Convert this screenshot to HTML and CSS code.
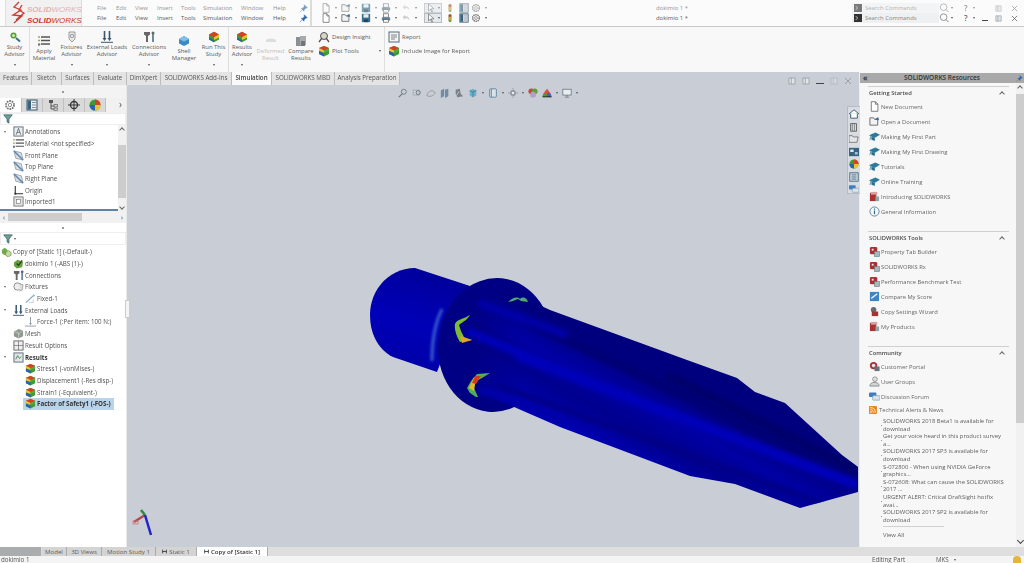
FILE: index.html
```html
<!DOCTYPE html>
<html lang="en">
<head>
<meta charset="utf-8">
<title>SOLIDWORKS</title>
<link rel="stylesheet" href="styles.css">
</head>
<body>
<svg class="defs" aria-hidden="true">
  <symbol id="doc" viewBox="0 0 12 12"><path d="M2.5 .8h4.6l2.6 2.6v7.8h-7.2z M7 .8v2.7h2.7" fill="#fff" stroke="#666" stroke-width=".9"/></symbol>
  <symbol id="open" viewBox="0 0 12 12"><path d="M1 2h4l1 1.500h3.500V10H1z" fill="#f3f3f3" stroke="#666"/><path d="M6 4l4-3 1 3.500z" fill="#3a6e96"/></symbol>
  <symbol id="save" viewBox="0 0 12 12"><rect x="1" y="1" width="10" height="10" fill="#39708f"/><rect x="3" y="1.500" width="6" height="4" fill="#e6eef2"/><rect x="3.500" y="7.500" width="5" height="3.500" fill="#24465c"/></symbol>
  <symbol id="print" viewBox="0 0 12 12"><rect x="3" y="1" width="6" height="4" fill="#fff" stroke="#555" stroke-width=".8"/><rect x="1" y="5" width="10" height="4" rx="1" fill="#5d7f96"/><rect x="3" y="8" width="6" height="3" fill="#fff" stroke="#555" stroke-width=".8"/></symbol>
  <symbol id="undo" viewBox="0 0 12 12"><path d="M2 5l3-3v2c3 0 5 1 5 5-1-2-2-3-5-3v2z" fill="#ccc"/></symbol>
  <symbol id="cursor" viewBox="0 0 12 12"><path d="M3 1l6.500 6H6.300l1.600 3.600-1 .4-1.600-3.600L3 9.500z" fill="#fff" stroke="#666" stroke-width=".8"/></symbol>
  <symbol id="flag" viewBox="0 0 12 12"><rect x="4" y="1" width="4" height="10" rx="2" fill="#a8a872"/><circle cx="6" cy="3.300" r="1.600" fill="#c8402c"/><circle cx="6" cy="7" r="1.500" fill="#d9a52a"/><circle cx="6" cy="9.500" r="1" fill="#4d9a3a"/></symbol>
  <symbol id="list" viewBox="0 0 12 12"><rect x="1" y="1" width="10" height="10" fill="#e8eef1" stroke="#35596f"/><rect x="1.500" y="1.500" width="3.500" height="9" fill="#38637e"/><path d="M6 3.500h4M6 6h4M6 8.500h4" stroke="#777" stroke-width=".8"/></symbol>
  <symbol id="gear" viewBox="0 0 12 12"><circle cx="6" cy="6" r="4" fill="none" stroke="#777" stroke-width="1.800" stroke-dasharray="1.700 .8"/><circle cx="6" cy="6" r="1.700" fill="none" stroke="#777" stroke-width=".8"/></symbol>
  <symbol id="pin" viewBox="0 0 12 12"><path d="M7 1l4 4-2 .5-2 2-.5 2L3 6l2-.5 2-2zM4 8l-3 3" fill="#2f67a8" stroke="#2f67a8" stroke-width=".7"/></symbol>
  <symbol id="prompt" viewBox="0 0 12 12"><rect width="12" height="12" fill="#333"/><path d="M2.500 3l3 3-3 3" fill="none" stroke="#ddd" stroke-width="1.200"/></symbol>
  <symbol id="search" viewBox="0 0 12 12"><circle cx="5.500" cy="5" r="4" fill="none" stroke="#777" stroke-width=".9"/><path d="M8.500 8l3 3" stroke="#777" stroke-width="1.100"/></symbol>
  <symbol id="x" viewBox="0 0 8 8"><path d="M1 1l6 6M7 1L1 7" stroke="#666" stroke-width=".9"/></symbol>
  <symbol id="beam" viewBox="0 0 8 8"><path d="M1 1v6M7 1v6M1 4h6" stroke="#26323c" stroke-width="1.300"/></symbol>
  <symbol id="study" viewBox="0 0 12 12"><circle cx="4.500" cy="4.500" r="3" fill="#4f9d3f"/><circle cx="4.500" cy="4.500" r="1.500" fill="#d8e8a0"/><path d="M7 7l4 3.500" stroke="#33718f" stroke-width="2"/></symbol>
  <symbol id="material" viewBox="0 0 12 12"><path d="M3 2h9M3 5.500h9M3 9h9" stroke="#555" stroke-width="1.300"/><path d="M0 2h2M0 5.500h2" stroke="#9aa36a" stroke-width="1.300"/><circle cx="1" cy="9.500" r="1.300" fill="#777"/></symbol>
  <symbol id="fixtures" viewBox="0 0 12 12"><path d="M3 1h6v7l-3 3-3-3z" fill="#e8e8e8" stroke="#888" stroke-width=".8"/><circle cx="6" cy="5" r="1.700" fill="none" stroke="#888" stroke-width=".8"/></symbol>
  <symbol id="loads" viewBox="0 0 12 12"><path d="M3.500 0v8M8.500 0v8" stroke="#39586f" stroke-width="1.600"/><path d="M1.500 7h4l-2 3zM6.500 7h4l-2 3z" fill="#39586f"/><path d="M0 11.300h12" stroke="#39586f"/></symbol>
  <symbol id="conn" viewBox="0 0 12 12"><path d="M1 1h6v2.500L5 5v6H3V5L1 3.500z" fill="#666"/><rect x="9" y="1" width="2" height="10" fill="#6b8a9d"/><circle cx="10" cy="2" r="1.500" fill="#666"/></symbol>
  <symbol id="shell" viewBox="0 0 12 12"><path d="M1 4l5-3 5 3v4.500L6 11 1 8.500z" fill="#3d8bc4"/><path d="M1 4l5 2.500L11 4 6 1z" fill="#7fc0e8"/></symbol>
  <symbol id="run" viewBox="0 0 12 12"><path d="M1 3.500L6 .8l5 2.700v5L6 11.200 1 8.500z" fill="#3f9a35"/><path d="M1 3.500L6 .8l5 2.700-5 2.700z" fill="#d93f24"/><path d="M6 6.200l5-2.700v3L6 9z" fill="#eac52d"/><path d="M1 8.500V6.500l5 2.500v2.200z" fill="#2d62ae"/></symbol>
  <symbol id="deform" viewBox="0 0 12 12"><path d="M1 5c3-2 7-2 10 0v2H1z" fill="#ddd"/></symbol>
  <symbol id="compare" viewBox="0 0 12 12"><rect x="1" y="2" width="6" height="9" fill="#8b8f92"/><rect x="5" y="1" width="6" height="9" fill="#a7abae"/><rect x="6" y="6" width="4" height="5" fill="#6f7578"/></symbol>
  <symbol id="insight" viewBox="0 0 12 12"><circle cx="6" cy="5" r="3.500" fill="#d6d6c8" stroke="#555"/><path d="M1 11l3-4M11 11L8 7" stroke="#555" stroke-width="1.300"/></symbol>
  <symbol id="report" viewBox="0 0 12 12"><rect x="1" y="1" width="10" height="10" fill="#f4f4f4" stroke="#4f6d80"/><path d="M3 4h6M3 6h6M3 8h4" stroke="#666" stroke-width=".8"/></symbol>
  <symbol id="assembly" viewBox="0 0 12 12"><path d="M1 1l8 2 2 8-8-2z" fill="#d9dfe4" stroke="#77838c" stroke-width=".7"/><path d="M1 1l10 10" stroke="#5f86ac" stroke-width="1.600"/></symbol>
  <symbol id="annot" viewBox="0 0 12 12"><rect x="1" y="1" width="10" height="10" fill="#e9eef2" stroke="#5d6b75"/><path d="M3.500 9.500L6 2.500l2.500 7M4.500 7h3" fill="none" stroke="#555" stroke-width=".8"/></symbol>
  <symbol id="origin" viewBox="0 0 12 12"><path d="M2.500 1v8.500H11" fill="none" stroke="#333" stroke-width="1.200"/><rect x="1.500" y="8.500" width="2" height="2" fill="#333"/></symbol>
  <symbol id="imported" viewBox="0 0 12 12"><rect x="1" y="1" width="10" height="10" fill="#e5e5e5" stroke="#777"/><rect x="4" y="4" width="4" height="4" fill="#fff" stroke="#777" stroke-width=".7"/></symbol>
  <symbol id="filter" viewBox="0 0 12 12"><path d="M.8 1h10.400L7.200 6v5L4.800 9.500V6z" fill="#6f9f8c" stroke="#33586f" stroke-width=".8"/></symbol>
  <symbol id="cubes" viewBox="0 0 12 12"><path d="M1 4l3-2 3 2v4L4 10 1 8z" fill="#75a84e"/><path d="M5 7l3-2 3 2v3l-3 2-3-2z" fill="#c5d9a0" stroke="#48752e" stroke-width=".6"/></symbol>
  <symbol id="part" viewBox="0 0 12 12"><path d="M1 5l4-3 6 2-1 6-6 1.500-3-3z" fill="#66a13d"/><path d="M4 6l2 2 4-5.500" fill="none" stroke="#1f3f1a" stroke-width="1.300"/></symbol>
  <symbol id="clock" viewBox="0 0 12 12"><circle cx="5" cy="6" r="4" fill="#eee" stroke="#888"/><path d="M7 3l4 1-1 6-3 1" fill="#ddd" stroke="#888" stroke-width=".7"/></symbol>
  <symbol id="fixed" viewBox="0 0 12 12"><path d="M1 10.500L9 3" stroke="#7fa8c8" stroke-width="1.200"/><path d="M4 10.500h5V7" fill="none" stroke="#bbb" stroke-width=".8"/><path d="M9 1l2 2-2 1z" fill="#7fa8c8"/></symbol>
  <symbol id="force" viewBox="0 0 12 12"><path d="M6 1v8" stroke="#8e9aa5"/><path d="M4.500 7.500h3L6 10z" fill="#8e9aa5"/><path d="M0 11h12" stroke="#8e9aa5"/></symbol>
  <symbol id="mesh" viewBox="0 0 12 12"><path d="M1 4l5-3 5 2v6l-5 2.500L1 9z" fill="#8e988b"/><path d="M1 4l5 2 5-3M6 6v5.500M3.500 2.500L8 8" stroke="#e9e9e9" stroke-width=".5" fill="none"/></symbol>
  <symbol id="options" viewBox="0 0 12 12"><rect x="1" y="1" width="10" height="10" fill="#eee" stroke="#666"/><path d="M6 1v10M1 6h10" stroke="#666" stroke-width=".7"/></symbol>
  <symbol id="results" viewBox="0 0 12 12"><rect x="1" y="1" width="10" height="10" fill="#dfe5e8" stroke="#5d6b75"/><path d="M3 8l2-4 2 3 2-2" fill="none" stroke="#4c8158" stroke-width="1"/></symbol>
  <symbol id="plot" viewBox="0 0 12 12"><path d="M1 3l5-2 5 2v6l-5 2.500L1 9z" fill="#3f9a35"/><path d="M1 3l5-2 5 2-5 2.500z" fill="#d93f24"/><path d="M1 3l5 2.500V8L1 6z" fill="#eac52d"/><path d="M6 5.500L11 3v3L6 8z" fill="#55a83c"/><path d="M1 6l5 2v3.500L1 9z" fill="#2d62ae"/></symbol>
  <symbol id="config" viewBox="0 0 12 12"><rect x="2" y="1" width="4" height="3" fill="#555"/><path d="M4 4v6h3M4 7h3" fill="none" stroke="#555"/><rect x="7" y="5.500" width="3.500" height="2.500" fill="#c7ccd0" stroke="#555" stroke-width=".6"/><rect x="7" y="9" width="3.500" height="2.500" fill="#c7ccd0" stroke="#555" stroke-width=".6"/></symbol>
  <symbol id="cross" viewBox="0 0 12 12"><circle cx="6" cy="6" r="3.500" fill="none" stroke="#333" stroke-width="1.300"/><path d="M6 0v12M0 6h12" stroke="#333"/></symbol>
  <symbol id="cap" viewBox="0 0 12 12"><path d="M0 4.500L7 1.500l5 2.500-6 3.500z" fill="#2c7a9b"/><path d="M3 6.500v2.800l3 1v-2.500zM2 5.500L1 10" fill="#236a88" stroke="#236a88" stroke-width=".7"/></symbol>
  <symbol id="book" viewBox="0 0 12 12"><rect x="1" y="2" width="7" height="9" fill="#a93232"/><rect x="2" y="1" width="7" height="3" fill="#d8a0a0"/><rect x="7" y="6" width="4" height="5" fill="#90a5ad"/></symbol>
  <symbol id="info" viewBox="0 0 12 12"><circle cx="6" cy="6" r="5" fill="#f4f8fb" stroke="#5b7f9c"/><path d="M6 5v4M6 2.800v1.200" stroke="#3b6686" stroke-width="1.300"/></symbol>
  <symbol id="tool" viewBox="0 0 12 12"><rect x="1" y="1" width="8" height="8" rx="1.500" fill="#a83131"/><rect x="3" y="3" width="2" height="2" fill="#eee"/><rect x="6" y="6" width="5.500" height="5.500" fill="#a8b7bd" stroke="#607078" stroke-width=".6"/></symbol>
  <symbol id="score" viewBox="0 0 12 12"><rect x="1" y="1" width="10" height="10" fill="#3c84c4"/><path d="M2.500 8L9 3" stroke="#e8f2fa" stroke-width="1.500"/></symbol>
  <symbol id="wizard" viewBox="0 0 12 12"><circle cx="5" cy="4" r="3" fill="#5f6d73"/><rect x="3" y="6" width="7" height="5" fill="#a83131"/></symbol>
  <symbol id="portal" viewBox="0 0 12 12"><circle cx="5" cy="5" r="4" fill="#a83131"/><circle cx="5" cy="5" r="2" fill="#dfe5ea"/><rect x="6" y="6" width="5.500" height="5" fill="#63737b"/></symbol>
  <symbol id="users" viewBox="0 0 12 12"><circle cx="6.500" cy="3.500" r="2.500" fill="#e5e5e5" stroke="#777" stroke-width=".8"/><path d="M1 11c0-3 2-4 5-4s5 1 5 4z" fill="#cfd6da" stroke="#777" stroke-width=".8"/></symbol>
  <symbol id="forum" viewBox="0 0 12 12"><rect x="0" y="1.500" width="8" height="5" rx="1" fill="#3f7cc0"/><rect x="4" y="5" width="8" height="5" rx="1" fill="#d8e3ec" stroke="#6d8aa3" stroke-width=".6"/></symbol>
  <symbol id="rss" viewBox="0 0 12 12"><rect width="12" height="12" rx="1" fill="#e58a2c"/><circle cx="3" cy="9" r="1.200" fill="#fff"/><path d="M2 5.500c3 0 4.500 1.500 4.500 4.500M2 2.500c5 0 7.500 2.500 7.500 7.500" fill="none" stroke="#fff" stroke-width="1.100"/></symbol>
  <symbol id="home" viewBox="0 0 12 12"><path d="M0 6l6-5 6 5M2 5.500V11h8V5.500" fill="#fff" stroke="#33566e" stroke-width="1.100"/></symbol>
  <symbol id="parts" viewBox="0 0 12 12"><rect x="2" y="2" width="7" height="9" fill="#d7dbdd" stroke="#555"/><path d="M4 2v9M6.500 2v9" stroke="#555" stroke-width=".7"/></symbol>
  <symbol id="folder" viewBox="0 0 12 12"><path d="M0 2h4l1 1.500h6L9.500 10H0z" fill="#e3e5e6" stroke="#555" stroke-width=".8"/></symbol>
  <symbol id="palette" viewBox="0 0 12 12"><rect x="0" y="1" width="12" height="10" fill="#38637e"/><rect x="1.500" y="3" width="4" height="3" fill="#dfe9ef"/><rect x="7" y="6" width="3.500" height="3" fill="#a7c0cf"/></symbol>
  <symbol id="ball" viewBox="0 0 12 12"><circle cx="6" cy="6" r="5.500" fill="#3f9a35"/><path d="M6 6V.5A5.500 5.500 0 0 1 11.500 6z" fill="#d93f24"/><path d="M6 6h5.500A5.500 5.500 0 0 1 6 11.500z" fill="#eac52d"/><path d="M6 6v5.500A5.500 5.500 0 0 1 .5 6z" fill="#2d62ae"/></symbol>
  <symbol id="tree" viewBox="0 0 12 12"><rect x="1" y="1" width="10" height="10" fill="#d9e4ea" stroke="#33566e"/><path d="M3 3.500h6M3 6h6M3 8.500h6" stroke="#33566e"/></symbol>
  <symbol id="panel" viewBox="0 0 12 12"><rect x="1.500" y="1.500" width="9" height="9" fill="#dfe4e7" stroke="#8c9398"/><path d="M5 1.500v9" stroke="#8c9398"/></symbol>
  <symbol id="hud1" viewBox="0 0 12 12"><circle cx="7" cy="4.500" r="3" fill="none" stroke="#687480"/><path d="M5 7l-4 4" stroke="#687480" stroke-width="1.300"/></symbol>
  <symbol id="hud2" viewBox="0 0 12 12"><rect x="1.500" y="2.500" width="7" height="6" fill="none" stroke="#8b949c" stroke-dasharray="1.500 1"/><circle cx="7.500" cy="5.500" r="2.500" fill="none" stroke="#687480"/></symbol>
  <symbol id="hud3" viewBox="0 0 12 12"><path d="M1 9c2-7 8-7 10-3-2 4-7 5-10 3z" fill="none" stroke="#8b949c"/></symbol>
  <symbol id="hud4" viewBox="0 0 12 12"><path d="M1 3l4-2v9l-4 2zM6 2l4-1v9l-4 2z" fill="#6f8da3"/></symbol>
  <symbol id="hud5" viewBox="0 0 12 12"><path d="M2 2l5-1 1 6 3 3-7 1-2-4z" fill="#7a8188"/><path d="M3 9l3-5" stroke="#dde" stroke-width=".8"/></symbol>
  <symbol id="hud6" viewBox="0 0 12 12"><path d="M2 3l4-2 4 2v6l-4 2-4-2z" fill="#6bb0c8"/><path d="M6 5v6M2 3l4 2 4-2" stroke="#356f88" fill="none" stroke-width=".8"/></symbol>
  <symbol id="hud7" viewBox="0 0 12 12"><rect x="2" y="1" width="8" height="10" rx="1" fill="#dbe3e8" stroke="#4f7e9e"/><path d="M4 1v10" stroke="#4f7e9e"/></symbol>
  <symbol id="hud8" viewBox="0 0 12 12"><circle cx="6" cy="6" r="3.500" fill="#8f969c"/><circle cx="6" cy="6" r="1.500" fill="#eee"/><path d="M6 0v2M6 10v2M0 6h2M10 6h2" stroke="#8f969c"/></symbol>
  <symbol id="hud9" viewBox="0 0 12 12"><circle cx="4" cy="4" r="3.500" fill="#c9463b"/><circle cx="8" cy="4" r="3.500" fill="#5f9d3f"/><circle cx="6" cy="8" r="3.500" fill="#b4a0c0"/></symbol>
  <symbol id="hud10" viewBox="0 0 12 12"><path d="M6 1l4 5H2z" fill="#d9503e"/><path d="M2 6h4v5H0z" fill="#55963a"/><path d="M6 6h4l2 5H6z" fill="#3d67b0"/><path d="M1 10.500h10" stroke="#222"/></symbol>
  <symbol id="hud11" viewBox="0 0 12 12"><rect x="1" y="1.500" width="10" height="7" fill="#e9eef1" stroke="#6d7880"/><path d="M6 8.500v2M3.500 11h5" stroke="#6d7880"/></symbol>
</svg>

<div class="app">
  <header class="title">
    <div class="logo">
      <div class="logo-ghost"><span class="sw-a">SOLID</span><span class="sw-b">WORKS</span></div>
      <div class="logo-main"><span class="sw-a">SOLID</span><span class="sw-b">WORKS</span></div>
      <svg class="logo-mark" viewBox="0 0 16 24"><path d="M9 1L4 6l7 3-8 5 9 1-8 7M12 4l-3 5 5 3-8 7" fill="none" stroke="#cc3a34" stroke-width="1.300"/></svg>
    </div>
    <nav class="menus">
      <div class="menu-row ghost"><span>File</span><span>Edit</span><span>View</span><span>Insert</span><span>Tools</span><span>Simulation</span><span>Window</span><span>Help</span><svg class="i9"><use href="#pin"/></svg></div>
      <div class="menu-row"><span>File</span><span>Edit</span><span>View</span><span>Insert</span><span>Tools</span><span>Simulation</span><span>Window</span><span>Help</span><svg class="i9"><use href="#pin"/></svg></div>
    </nav>
    <div class="quick">
      <div class="quick-row ghost">
        <span class="q"><svg class="i10"><use href="#doc"/></svg><i class="caret"></i></span>
        <span class="q"><svg class="i10"><use href="#open"/></svg><i class="caret"></i></span>
        <span class="q"><svg class="i10"><use href="#save"/></svg><i class="caret"></i></span>
        <span class="q"><svg class="i10"><use href="#print"/></svg><i class="caret"></i></span>
        <span class="q"><svg class="i10"><use href="#undo"/></svg><i class="caret"></i></span>
        <span class="q sel"><svg class="i10"><use href="#cursor"/></svg><i class="caret"></i></span>
        <span class="q narrow"><svg class="i10"><use href="#flag"/></svg></span>
        <span class="q narrow"><svg class="i10"><use href="#list"/></svg></span>
        <span class="q"><svg class="i10"><use href="#gear"/></svg><i class="caret"></i></span>
      </div>
      <div class="quick-row">
        <span class="q"><svg class="i10"><use href="#doc"/></svg><i class="caret"></i></span>
        <span class="q"><svg class="i10"><use href="#open"/></svg><i class="caret"></i></span>
        <span class="q"><svg class="i10"><use href="#save"/></svg><i class="caret"></i></span>
        <span class="q"><svg class="i10"><use href="#print"/></svg><i class="caret"></i></span>
        <span class="q"><svg class="i10"><use href="#undo"/></svg><i class="caret"></i></span>
        <span class="q sel"><svg class="i10"><use href="#cursor"/></svg><i class="caret"></i></span>
        <span class="q narrow"><svg class="i10"><use href="#flag"/></svg></span>
        <span class="q narrow"><svg class="i10"><use href="#list"/></svg></span>
        <span class="q"><svg class="i10"><use href="#gear"/></svg><i class="caret"></i></span>
      </div>
    </div>
    <div class="docname"><div class="ghost">dokimio 1 *</div><div>dokimio 1 *</div></div>
    <div class="cmd">
      <div class="cmd-row ghost">
        <span class="search-box"><svg class="i8"><use href="#prompt"/></svg><span>Search Commands</span></span>
        <svg class="i10"><use href="#search"/></svg><i class="caret gap-s"></i><span class="help">?</span><i class="caret"></i><i class="win-min"></i><svg class="i7 rest"><use href="#panel"/></svg><svg class="i7 close"><use href="#x"/></svg>
      </div>
      <div class="cmd-row">
        <span class="search-box"><svg class="i8"><use href="#prompt"/></svg><span>Search Commands</span></span>
        <svg class="i10"><use href="#search"/></svg><i class="caret gap-s"></i><span class="help">?</span><i class="caret"></i><i class="win-min on"></i><svg class="i7 rest"><use href="#panel"/></svg><svg class="i7 close"><use href="#x"/></svg>
      </div>
    </div>
  </header>

  <section class="ribbon">
    <div class="rb w29 sep"><svg class="i12"><use href="#study"/></svg><span>Study<br>Advisor</span><i class="caret"></i></div>
    <div class="rb w28 low"><svg class="i12"><use href="#material"/></svg><span>Apply<br>Material</span></div>
    <div class="rb w27"><svg class="i12"><use href="#fixtures"/></svg><span>Fixtures<br>Advisor</span><i class="caret"></i></div>
    <div class="rb w44"><svg class="i12"><use href="#loads"/></svg><span>External Loads<br>Advisor</span><i class="caret"></i></div>
    <div class="rb w40"><svg class="i12"><use href="#conn"/></svg><span>Connections<br>Advisor</span><i class="caret"></i></div>
    <div class="rb w30 low"><svg class="i12"><use href="#shell"/></svg><span>Shell<br>Manager</span></div>
    <div class="rb w30 sep"><svg class="i12"><use href="#run"/></svg><span>Run This<br>Study</span><i class="caret"></i></div>
    <div class="rb w26"><svg class="i12"><use href="#run"/></svg><span>Results<br>Advisor</span><i class="caret"></i></div>
    <div class="rb w31 low off"><svg class="i12"><use href="#deform"/></svg><span>Deformed<br>Result</span></div>
    <div class="rb w30 low"><svg class="i12"><use href="#compare"/></svg><span>Compare<br>Results</span></div>
    <div class="rb-list w69 sep">
      <div class="rb-line"><svg class="i12"><use href="#insight"/></svg><span>Design Insight</span></div>
      <div class="rb-line"><svg class="i12"><use href="#plot"/></svg><span>Plot Tools</span><i class="caret push"></i></div>
    </div>
    <div class="rb-list grow">
      <div class="rb-line"><svg class="i12"><use href="#report"/></svg><span>Report</span></div>
      <div class="rb-line"><svg class="i12"><use href="#plot"/></svg><span>Include Image for Report</span></div>
    </div>
  </section>

  <main class="workspace">
    <div class="center">
      <nav class="tabs">
        <span class="tab w32">Features</span><span class="tab w30t">Sketch</span><span class="tab w32">Surfaces</span><span class="tab w33">Evaluate</span><span class="tab w34">DimXpert</span><span class="tab w71">SOLIDWORKS Add-Ins</span><span class="tab w40t active">Simulation</span><span class="tab w63">SOLIDWORKS MBD</span><span class="tab w65">Analysis Preparation</span>
        <div class="view-win">
          <svg class="i8"><use href="#panel"/></svg><svg class="i8"><use href="#panel"/></svg><i class="win-min on"></i><svg class="i8 faded"><use href="#panel"/></svg><svg class="i8 faded"><use href="#x"/></svg>
        </div>
      </nav>
      <div class="body">
        <aside class="left">
          <div class="splitter"><i></i></div>
          <div class="mgr-tabs">
            <span class="mgr first"><svg class="i12"><use href="#gear"/></svg></span>
            <span class="mgr"><svg class="i12"><use href="#list"/></svg></span>
            <span class="mgr"><svg class="i12"><use href="#config"/></svg></span>
            <span class="mgr"><svg class="i12"><use href="#cross"/></svg></span>
            <span class="mgr"><svg class="i12"><use href="#ball"/></svg></span>
            <span class="mgr-next">›</span>
          </div>
          <div class="filter"><svg class="i10"><use href="#filter"/></svg></div>
          <div class="tree-top">
            <div class="tree">
              <div class="row l1 exp"><svg class="i11"><use href="#annot"/></svg><span>Annotations</span></div>
              <div class="row l1"><svg class="i11"><use href="#material"/></svg><span>Material &lt;not specified&gt;</span></div>
              <div class="row l1"><svg class="i11"><use href="#assembly"/></svg><span>Front Plane</span></div>
              <div class="row l1"><svg class="i11"><use href="#assembly"/></svg><span>Top Plane</span></div>
              <div class="row l1"><svg class="i11"><use href="#assembly"/></svg><span>Right Plane</span></div>
              <div class="row l1"><svg class="i11"><use href="#origin"/></svg><span>Origin</span></div>
              <div class="row l1"><svg class="i11"><use href="#imported"/></svg><span>Imported1</span></div>
              <div class="tree-end"></div>
            </div>
            <div class="vscroll"><i class="arrow up"></i><i class="vthumb"></i><i class="arrow down"></i></div>
          </div>
          <div class="hscroll"><span class="h-arrow">‹</span><i class="hthumb"></i><span class="h-arrow">›</span></div>
          <div class="splitter second"><i></i></div>
          <div class="filter two"><svg class="i10"><use href="#filter"/></svg><i class="caret"></i></div>
          <div class="tree">
            <div class="row l0"><svg class="i11"><use href="#cubes"/></svg><span>Copy of [Static 1] (-Default-)</span></div>
            <div class="row l1"><svg class="i11"><use href="#part"/></svg><span>dokimio 1 (-ABS (1)-)</span></div>
            <div class="row l1"><svg class="i11"><use href="#conn"/></svg><span>Connections</span></div>
            <div class="row l1 exp"><svg class="i11"><use href="#clock"/></svg><span>Fixtures</span></div>
            <div class="row l2"><svg class="i11"><use href="#fixed"/></svg><span>Fixed-1</span></div>
            <div class="row l1 exp"><svg class="i11"><use href="#loads"/></svg><span>External Loads</span></div>
            <div class="row l2"><svg class="i11"><use href="#force"/></svg><span>Force-1 (:Per item: 100 N:)</span></div>
            <div class="row l1"><svg class="i11"><use href="#mesh"/></svg><span>Mesh</span></div>
            <div class="row l1"><svg class="i11"><use href="#options"/></svg><span>Result Options</span></div>
            <div class="row l1 exp strong"><svg class="i11"><use href="#results"/></svg><span>Results</span></div>
            <div class="row l2"><svg class="i11"><use href="#plot"/></svg><span>Stress1 (-vonMises-)</span></div>
            <div class="row l2"><svg class="i11"><use href="#plot"/></svg><span>Displacement1 (-Res disp-)</span></div>
            <div class="row l2"><svg class="i11"><use href="#plot"/></svg><span>Strain1 (-Equivalent-)</span></div>
            <div class="row strong selected"><svg class="i11"><use href="#plot"/></svg><span>Factor of Safety1 (-FOS-)</span></div>
          </div>
        </aside>
        <div class="gutter"><i class="collapse"></i></div>
        <div class="viewport">
          <svg class="model" viewBox="0 0 732 462" aria-label="Factor of safety plot of a shaft">
            <defs>
              <linearGradient id="shaftG" gradientUnits="userSpaceOnUse" x1="545" y1="300" x2="485" y2="410">
                <stop offset="0" stop-color="#00007e"/>
                <stop offset=".25" stop-color="#0000a4"/>
                <stop offset=".45" stop-color="#00008e"/>
                <stop offset=".7" stop-color="#0000b2"/>
                <stop offset="1" stop-color="#00008e"/>
              </linearGradient>
              <linearGradient id="cylG" gradientUnits="userSpaceOnUse" x1="290" y1="185" x2="260" y2="285">
                <stop offset="0" stop-color="#00009c"/>
                <stop offset=".5" stop-color="#0000b8"/>
                <stop offset="1" stop-color="#0000a4"/>
              </linearGradient>
              <linearGradient id="fade" gradientUnits="userSpaceOnUse" x1="345" y1="0" x2="395" y2="0">
                <stop offset="0" stop-color="#000"/>
                <stop offset="1" stop-color="#fff"/>
              </linearGradient>
              <mask id="shaftMask" maskUnits="userSpaceOnUse" x="0" y="0" width="732" height="462"><rect width="732" height="462" fill="url(#fade)"/></mask>
              <filter id="soft"><feGaussianBlur stdDeviation=".5"/></filter>
              <filter id="soft2"><feGaussianBlur stdDeviation="2"/></filter>
              <filter id="soft3" x="-100%" width="300%"><feGaussianBlur stdDeviation="1.400"/></filter>
              <clipPath id="shaftClip"><path d="M423 225L560 275 610 293 628 307 658 318 715 370 731 382V407L673 423 608 399 563 391 433 342 378 318 330 320 330 200 380 200z"/></clipPath>
            </defs>
            <path d="M243 230C243 205 262 183 288 183L343 201 310 287 266 272C252 265 243 250 243 230z" fill="url(#cylG)"/>
            <ellipse cx="368" cy="260" rx="57" ry="67" transform="rotate(6 368 260)" fill="#000084"/>
            <g mask="url(#shaftMask)">
              <path d="M423 225L560 275 610 293 628 307 658 318 715 370 731 382V407L673 423 608 399 563 391 433 342 378 318 340 290 340 210 380 205z" fill="url(#shaftG)"/>
            </g>
            <g clip-path="url(#shaftClip)">
              <g filter="url(#soft2)">
                <path d="M400 235L730 395" stroke="#000076" stroke-width="11" fill="none"/>
                <path d="M390 270L730 400" stroke="#0000ba" stroke-width="10" fill="none"/>
                <path d="M370 300L700 420" stroke="#000086" stroke-width="6" fill="none"/>
                <path d="M540 290L730 385" stroke="#00006c" stroke-width="9" fill="none"/>
                <path d="M352 218L440 250" stroke="#0000a8" stroke-width="8" fill="none"/>
                <path d="M340 246L440 288" stroke="#0000ba" stroke-width="8" fill="none"/>
                <path d="M352 304L440 336" stroke="#0000aa" stroke-width="8" fill="none"/>
              </g>
            </g>
            <path d="M315 224C308 238 305 256 305 276" stroke="#5fa6e0" stroke-width="2.500" fill="none" opacity=".7" filter="url(#soft3)"/>
            <g filter="url(#soft)">
              <path d="M343 230C337 234 330 234 328 239 327 245 330 252 333 257L338 256 345 255 337 252 334 246 332 240C336 237 341 234 343 230z" fill="#7dbb36"/>
              <path d="M333 251l2 7 10-3-7-2z" fill="#e4a326"/>
              <path d="M363 288L350 289 344 296 340 303 343 308 349 312 351 312 347 303 349 296 355 293z" fill="#4fb05a"/>
              <path d="M347 292l-5 11 5 3 1-7 5-6z" fill="#e5b82a"/>
              <path d="M348 291l-3 7 4 1 3-5 2-3z" fill="#cf3a1b"/>
              <path d="M381 217C385 213 390 211 393 214 396 211 400 213 401 217L394 216 391 214 386 216z" fill="#4fa86c"/>
            </g>
          </svg>
          <div class="hud">
            <svg class="i10"><use href="#hud1"/></svg><svg class="i10"><use href="#hud2"/></svg><svg class="i10"><use href="#hud3"/></svg><svg class="i10"><use href="#hud4"/></svg><svg class="i10"><use href="#hud5"/></svg><svg class="i10"><use href="#hud6"/></svg><i class="caret"></i><svg class="i10"><use href="#hud7"/></svg><i class="caret"></i><svg class="i10"><use href="#hud8"/></svg><i class="caret"></i><svg class="i10"><use href="#hud9"/></svg><svg class="i10"><use href="#hud10"/></svg><i class="caret"></i><svg class="i10"><use href="#hud11"/></svg><i class="caret"></i>
          </div>
          <svg class="triad" viewBox="0 0 26 28" aria-label="Reference triad">
            <path d="M13 6L2 13" stroke="#b04a4a" stroke-width="2.500"/>
            <path d="M13 6L19 26" stroke="#2323c8" stroke-width="2.500"/>
            <path d="M13 6L9 1" stroke="#2c8a3c" stroke-width="2.500"/>
            <rect x="1" y="12" width="5" height="3" fill="none" stroke="#c77" stroke-width=".8"/>
          </svg>
        </div>
      </div>
    </div>
    <aside class="res">
      <div class="res-head"><span class="res-arrow">«</span><span class="res-title">SOLIDWORKS Resources</span><svg class="i7 res-pin"><use href="#pin"/></svg></div>
      <div class="res-body">
        <div class="side-tabs">
          <svg class="s-ic"><use href="#home"/></svg><svg class="s-ic"><use href="#parts"/></svg><svg class="s-ic"><use href="#folder"/></svg><svg class="s-ic"><use href="#palette"/></svg><svg class="s-ic"><use href="#ball"/></svg><svg class="s-ic"><use href="#tree"/></svg><svg class="s-ic"><use href="#forum"/></svg>
        </div>
        <div class="res-list">
          <section class="sect s1">
            <h2>Getting Started<i class="chev"></i></h2>
            <div class="link"><svg class="i11"><use href="#doc"/></svg><span>New Document</span></div>
            <div class="link"><svg class="i11"><use href="#open"/></svg><span>Open a Document</span></div>
            <div class="link"><svg class="i11"><use href="#cap"/></svg><span>Making My First Part</span></div>
            <div class="link"><svg class="i11"><use href="#cap"/></svg><span>Making My First Drawing</span></div>
            <div class="link"><svg class="i11"><use href="#cap"/></svg><span>Tutorials</span></div>
            <div class="link"><svg class="i11"><use href="#cap"/></svg><span>Online Training</span></div>
            <div class="link"><svg class="i11"><use href="#book"/></svg><span>Introducing SOLIDWORKS</span></div>
            <div class="link"><svg class="i11"><use href="#info"/></svg><span>General Information</span></div>
          </section>
          <section class="sect s2">
            <h2>SOLIDWORKS Tools<i class="chev"></i></h2>
            <div class="link"><svg class="i11"><use href="#tool"/></svg><span>Property Tab Builder</span></div>
            <div class="link"><svg class="i11"><use href="#tool"/></svg><span>SOLIDWORKS Rx</span></div>
            <div class="link"><svg class="i11"><use href="#tool"/></svg><span>Performance Benchmark Test</span></div>
            <div class="link"><svg class="i11"><use href="#score"/></svg><span>Compare My Score</span></div>
            <div class="link"><svg class="i11"><use href="#wizard"/></svg><span>Copy Settings Wizard</span></div>
            <div class="link"><svg class="i11"><use href="#book"/></svg><span>My Products</span></div>
          </section>
          <section class="sect s2">
            <h2>Community<i class="chev"></i></h2>
            <div class="link"><svg class="i11"><use href="#portal"/></svg><span>Customer Portal</span></div>
            <div class="link"><svg class="i11"><use href="#users"/></svg><span>User Groups</span></div>
            <div class="link"><svg class="i11"><use href="#forum"/></svg><span>Discussion Forum</span></div>
            <div class="link rss"><svg class="i8"><use href="#rss"/></svg><span>Technical Alerts &amp; News</span></div>
            <ul class="news">
              <li>SOLIDWORKS 2018 Beta1 is available for<br>download</li>
              <li>Get your voice heard in this product survey<br>a...</li>
              <li>SOLIDWORKS 2017 SP3 is available for<br>download</li>
              <li>S-072800 - When using NVIDIA GeForce<br>graphics...</li>
              <li>S-072608: What can cause the SOLIDWORKS<br>2017 ...</li>
              <li>URGENT ALERT: Critical DraftSight hotfix<br>avai...</li>
              <li>SOLIDWORKS 2017 SP2 is available for<br>download</li>
            </ul>
            <div class="view-all">View All</div>
          </section>
        </div>
        <div class="res-scroll"><i class="arrow up"></i><i class="res-thumb"></i><i class="arrow down big"></i></div>
      </div>
    </aside>
  </main>

  <nav class="doc-tabs">
    <span class="dt-strip"></span>
    <span class="dt w24">Model</span><span class="dt w35">3D Views</span><span class="dt w53">Motion Study 1</span><span class="dt w38 has-ic"><svg class="i5"><use href="#beam"/></svg>Static 1</span><span class="dt w71 active has-ic"><svg class="i5"><use href="#beam"/></svg>Copy of [Static 1]</span>
  </nav>
  <footer class="status">
    <span class="st-name">dokimio 1</span>
    <span class="st-edit">Editing Part</span>
    <span class="st-unit">MKS</span><i class="caret"></i>
    <i class="st-light"></i>
  </footer>
</div>
</body>
</html>
```

FILE: styles.css
```css
* { box-sizing: border-box; }
html, body { margin: 0; height: 100%; overflow: hidden; }
body {
  font-family: "Open Sans", "Noto Sans", "Liberation Sans", sans-serif;
  font-size: 5.900px;
  color: #5a5a5a;
  background: #f7f7f7;
}
svg { display: block; flex: none; }
i, b { font-style: normal; }
.defs { width: 0; height: 0; position: absolute; }
.i5 { width: 5px; height: 5px; }
.i7 { width: 7px; height: 7px; }
.i8 { width: 8px; height: 8px; }
.i9 { width: 9px; height: 9px; }
.i10 { width: 10px; height: 10px; }
.i11 { width: 11px; height: 11px; }
.i12 { width: 12px; height: 12px; }
.caret {
  display: block;
  flex: none;
  width: 0;
  height: 0;
  border: 1.500px solid transparent;
  border-top: 2px solid #555;
  border-bottom: 0;
}
.ghost { opacity: .65; }

.app { width: 1024px; height: 563px; display: flex; flex-direction: column; filter: blur(.3px); }

/* title bar */
.title {
  height: 27px;
  flex: none;
  display: flex;
  background: #fbfbfb;
  border-bottom: 1px solid #c9c9c9;
  overflow: hidden;
}
.logo {
  position: relative;
  width: 77px;
  margin-left: 5px;
  background: #f1f1f1;
  border: 1px solid #ddd;
  border-top: 0;
  border-bottom: 0;
  font: italic 8px "Liberation Sans", sans-serif;
  color: #c73833;
  padding-left: 21px;
}
.logo-ghost { height: 15px; padding-top: 4px; line-height: 11px; opacity: .35; }
.logo-main { height: 11px; line-height: 11px; }
.logo-mark { position: absolute; left: 4px; top: 1px; width: 16px; height: 24px; }
.sw-a { font-weight: 700; }
.menus {
  width: 215px;
  margin-left: 15px;
  padding-top: 3px;
  border-right: 2px solid #dcdcdc;
  flex: none;
}
.menu-row {
  display: grid;
  grid-template-columns: 19px 19px 22px 24px 22px 38px 32px 26px 9px;
  height: 10px;
  line-height: 10px;
  align-items: center;
}
.quick { width: 200px; flex: none; padding: 3px 0 0 4px; }
.quick-row { display: flex; height: 10px; align-items: center; padding-left: 5px; }
.q { width: 20px; display: flex; align-items: center; gap: 4px; flex: none; }
.q.sel {
  width: 18px;
  margin-left: 3px;
  margin-right: 1px;
  height: 10px;
  padding-left: 2px;
  gap: 2px;
  background: #e3e8ec;
  box-shadow: inset 0 0 0 1px #b5bcc2;
}
.q.narrow { width: 14px; padding-left: 2px; }
.docname { width: 340px; flex: none; padding: 3px 0 0 144px; line-height: 10px; }
.cmd { width: 171px; flex: none; padding-top: 3px; }
.cmd-row { display: flex; height: 10px; align-items: center; }
.search-box {
  width: 87px;
  height: 10px;
  display: flex;
  align-items: center;
  gap: 3px;
  padding-left: 2px;
  background: #eef0f2;
  color: #888;
  flex: none;
}
.gap-s { margin: 0 11px 0 2px; }
.help { font-weight: 600; font-size: 8px; color: #666; width: 6px; margin-right: 3px; line-height: 10px; }
.win-min { display: block; width: 6px; height: 5px; flex: none; margin-left: 7px; }
.win-min.on { border-bottom: 1.500px solid #444; }
.rest { margin-left: 7px; }
.close { margin-left: 9px; }

/* ribbon */
.ribbon {
  height: 45px;
  flex: none;
  display: flex;
  background: #f8f8f8;
}
.rb {
  display: flex;
  flex-direction: column;
  align-items: center;
  padding-top: 4px;
  text-align: center;
  line-height: 6.800px;
  white-space: nowrap;
  flex: none;
}
.rb span { margin-top: 1px; }
.rb .caret { margin-top: auto; margin-bottom: 6px; }
.rb.low { padding-top: 8px; }
.rb.off { color: #bdbdbd; }
.sep { border-right: 1px solid #dedede; }
.w29 { width: 30px; }
.w28 { width: 28px; }
.w27 { width: 27px; }
.w44 { width: 44px; }
.w40 { width: 40px; }
.w30 { width: 30px; }
.w26 { width: 26px; }
.w31 { width: 31px; }
.w69 { width: 69px; }
.rb-list { padding: 3px 0 0 2px; flex: none; }
.rb-list.grow { flex: 1; padding-left: 3px; }
.rb-line { height: 14px; display: flex; align-items: center; gap: 2px; white-space: nowrap; }
.push { margin-left: auto; margin-right: 3px; }

/* workspace */
.workspace { flex: 1; min-height: 0; display: flex; }
.center { flex: 1; min-width: 0; display: flex; flex-direction: column; background: #c9cdd6; }
.tabs { height: 13px; flex: none; display: flex; background: #c9cdd6; font-size: 6.200px; }
.tab {
  height: 13px;
  line-height: 12px;
  text-align: center;
  background: #e4e4e4;
  border-right: 1px solid #bcbcbc;
  white-space: nowrap;
  color: #555;
  flex: none;
}
.tab.active { background: #fafafa; font-weight: 600; color: #444; }
.w32 { width: 32px; }
.w30t { width: 30px; }
.w33 { width: 33px; }
.w34 { width: 34px; }
.w71 { width: 71px; }
.w40t { width: 40px; }
.w63 { width: 63px; }
.w65 { width: 65px; }
.view-win {
  margin-left: auto;
  padding-right: 7px;
  align-self: flex-end;
  height: 8px;
  display: flex;
  align-items: center;
  gap: 6px;
}
.view-win .win-min { margin-left: 0; width: 8px; }
.view-win .faded { opacity: .5; }
.body { flex: 1; min-height: 0; display: flex; }

/* left panel */
.left { width: 126px; flex: none; background: #fff; display: flex; flex-direction: column; color: #505050; font-size: 6.200px; }
.splitter { height: 13px; flex: none; display: flex; justify-content: center; align-items: center; background: #f3f3f3; }
.splitter i { width: 2px; height: 2px; background: #999; }
.splitter.second { height: 9px; background: #fff; }
.mgr-tabs { height: 15px; flex: none; display: flex; background: #f1f1f1; padding-right: 2px; }
.mgr {
  width: 21px;
  height: 14px;
  padding: 1px 0 0 4px;
  background: #d9d9d9;
  border-right: 1px solid #c0c0c0;
  flex: none;
}
.mgr.first { width: 22px; background: #fff; }
.mgr-next { margin-left: auto; margin-right: 2px; font-size: 10px; line-height: 12px; color: #555; }
.filter { height: 12px; flex: none; display: flex; align-items: center; padding-left: 2px; gap: 1px; background: #fff; border: 1px solid #eee; }
.filter.two { height: 13px; }
.tree-top { height: 86px; flex: none; display: flex; }
.tree-top .tree { flex: 1; min-width: 0; }
.tree { padding-top: 1px; }
.tree-end { height: 2px; margin-top: 1px; background: #5e83a7; }
.vscroll { width: 8px; flex: none; display: flex; flex-direction: column; background: #f1f1f1; }
.vthumb { display: block; width: 100%; height: 53px; margin-top: auto; margin-bottom: 7px; background: #cdcdcd; }
.arrow { display: block; width: 4px; height: 4px; margin: 3px auto 0; border: solid #666; border-width: 1px 0 0 1px; flex: none; }
.arrow.up { transform: rotate(45deg); }
.arrow.down { transform: rotate(225deg); margin: 0 auto 2px; }
.hscroll { height: 12px; flex: none; display: flex; align-items: center; background: #f1f1f1; line-height: 12px; font-size: 8px; }
.h-arrow { width: 8px; text-align: center; flex: none; }
.hthumb { display: block; width: 74px; height: 8px; background: #cdcdcd; margin-right: auto; }
.row { height: 11.700px; display: flex; align-items: center; gap: 1px; white-space: nowrap; position: relative; }
.l0 { padding-left: 1px; }
.l1 { padding-left: 13px; }
.l2 { padding-left: 25px; }
.exp::before {
  content: "";
  position: absolute;
  left: 4px;
  top: 5px;
  width: 0;
  height: 0;
  border: 1.500px solid transparent;
  border-top: 2px solid #666;
  border-bottom: 0;
}
.strong span { font-weight: 700; color: #333; }
.selected { margin-left: 23px; padding-left: 2px; width: 91px; background: #b9d3ea; }

.gutter { width: 1px; flex: none; background: #e9e9e9; position: relative; }
.collapse {
  position: absolute;
  left: -1px;
  top: 215px;
  width: 5px;
  height: 18px;
  background: #f4f4f4;
  border: 1px solid #ccc;
  z-index: 2;
}

/* viewport */
.viewport { flex: 1; min-width: 0; position: relative; background: #c9cdd6; overflow: hidden; }
.model { position: absolute; left: 0; top: 0; width: 732px; height: 462px; }
.hud { position: absolute; left: 271px; top: 3px; display: flex; align-items: center; gap: 4px; }
.triad { position: absolute; left: 5px; top: 424px; width: 26px; height: 28px; }

/* resources panel */
.res { width: 165px; flex: none; display: flex; flex-direction: column; background: #f7f7f7; border-left: 1px solid #eee; }
.res-head {
  height: 10px;
  margin-top: 1px;
  flex: none;
  display: flex;
  align-items: center;
  background: #a9a9a9;
  color: #333;
  font-weight: 600;
  font-size: 6.500px;
  line-height: 10px;
}
.res-arrow { width: 40px; padding-left: 3px; font-size: 8px; color: #222; flex: none; }
.res-title { flex: 1; padding-left: 4px; }
.res-pin { margin-right: 1px; }
.res-body { flex: 1; min-height: 0; display: flex; position: relative; }
.side-tabs {
  position: absolute;
  left: -13px;
  top: 23px;
  width: 13px;
  height: 88px;
  padding: 2px 0 0 1px;
  background: #d9dde3;
  border: 1px solid #b6bcc4;
  border-right: 0;
  display: flex;
  flex-direction: column;
  gap: 2.500px;
}
.s-ic { width: 10px; height: 10px; }
.res-list { flex: 1; min-width: 0; padding: 3px 7px 0 8px; }
.res-scroll { width: 8px; flex: none; display: flex; flex-direction: column; background: #f1f1f1; }
.res-thumb { display: block; width: 100%; height: 329px; margin-top: 4px; background: #cdcdcd; }
.res-scroll .down { margin-top: auto; margin-bottom: 4px; }
.res-scroll .big { width: 5px; height: 5px; border-width: 1.500px 0 0 1.500px; border-color: #444; }
.sect { border-top: 1px solid #d0d0d0; }
.s2 { margin-top: 12px; }
.sect h2 {
  margin: 0;
  height: 12px;
  font-size: 5.800px;
  font-weight: 600;
  line-height: 12px;
  color: #4a4a4a;
  position: relative;
  padding-left: 1px;
}
.chev {
  position: absolute;
  right: 5px;
  top: 5px;
  width: 4px;
  height: 4px;
  border: solid #666;
  border-width: 1px 0 0 1px;
  transform: rotate(45deg);
}
.link { height: 15px; display: flex; align-items: center; gap: 1px; padding-left: 1px; white-space: nowrap; color: #666; font-size: 5.800px; }
.link.rss { height: 11px; gap: 2px; }
.news { list-style: none; margin: 3px 0 0; padding: 0 0 0 15px; font-size: 5.900px; line-height: 7.600px; color: #5d5d5d; white-space: nowrap; }
.news li { position: relative; }
.news li::before {
  content: "";
  position: absolute;
  left: -2.500px;
  top: 7px;
  width: 1px;
  height: 1px;
  background: #d8884a;
}
.view-all { margin: 2px 0 0 15px; width: 61px; border-top: 1px solid #d0d0d0; padding-top: 5px; line-height: 7px; }

/* document tabs */
.doc-tabs { height: 9px; flex: none; display: flex; background: #dedede; line-height: 9px; color: #5c5c5c; font-size: 6.100px; }
.dt-strip { width: 41px; flex: none; background: #a9adad; margin-right: 1px; }
.dt { background: #d4d4d4; border-right: 1px solid #aaa; text-align: center; flex: none; white-space: nowrap; }
.dt.active { background: #fff; color: #333; font-weight: 600; }
.has-ic { display: flex; align-items: center; justify-content: center; gap: 2px; }
.w24 { width: 25px; }
.w35 { width: 35px; }
.w53 { width: 54px; }
.w38 { width: 41px; }

/* status bar */
.status { height: 7px; flex: none; display: flex; align-items: center; background: #f4f4f4; line-height: 7px; position: relative; color: #555; font-size: 6.200px; }
.st-name { margin-left: 1px; width: 871px; flex: none; }
.st-edit { width: 64px; flex: none; }
.st-unit { width: 18px; flex: none; }
.st-light { position: absolute; right: 3px; top: 0; width: 8px; height: 7px; border-radius: 50% 50% 0 0; background: #e3b63a; }
```
